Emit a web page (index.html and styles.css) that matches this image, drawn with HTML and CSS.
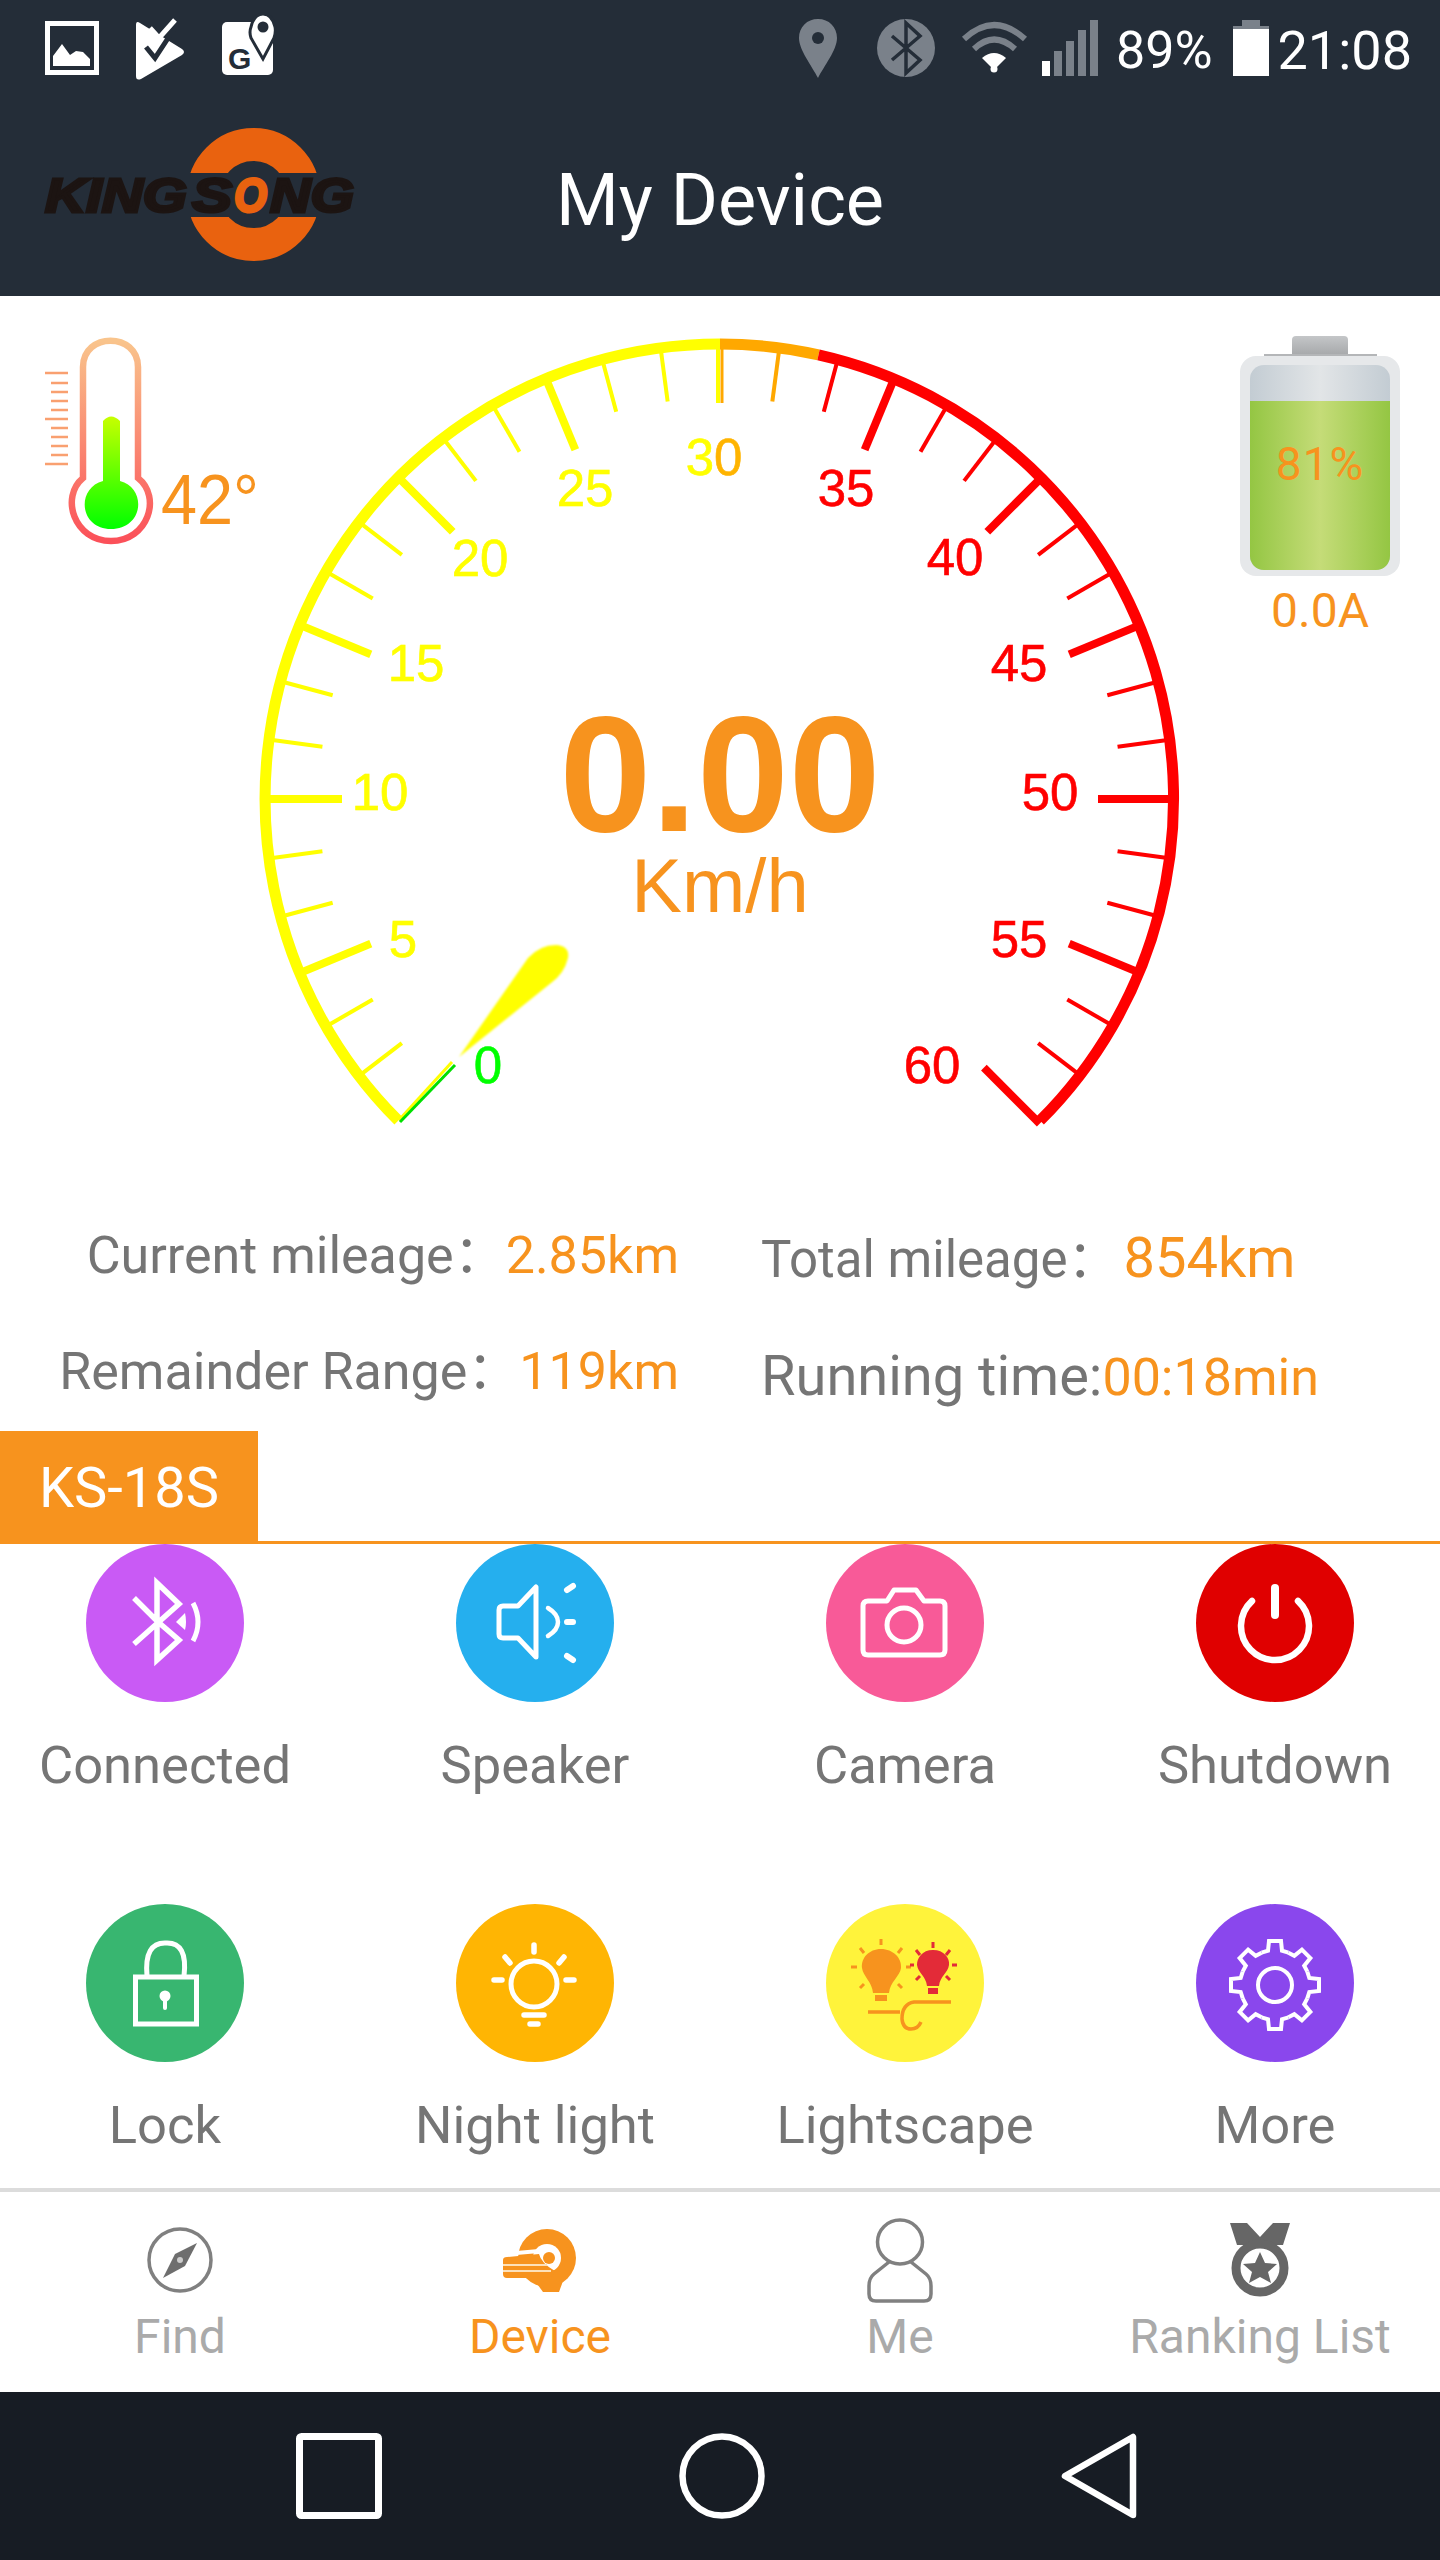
FILE: index.html
```html
<!DOCTYPE html>
<html lang="en">
<head>
    <meta charset="UTF-8">
    <title>My Device</title>
    <link rel="stylesheet" href="styles.css">
</head>
<body>
    <div class="app">
        <header class="top">
            <div class="status-bar">
                <div class="status-left">
                    <svg width="54" height="66" viewBox="0 0 54 66">
                        <rect x="2.5" y="9.5" width="49" height="49" fill="none" stroke="#fff" stroke-width="5"/>
                        <path d="M8 52V42L17 30L25 41L31 37L38 38L45 45V52Z" fill="#fff"/>
                    </svg>
                    <svg width="49" height="66" viewBox="0 0 49 66">
                        <path d="M0 11Q0 6 4 9L46 35Q50 38 46 41L5 65Q0 67 0 62Z" fill="#fff"/>
                        <path d="M10 33L19 44L42 9" fill="none" stroke="#242d38" stroke-width="5"/>
                        <path d="M14 14L23 24L39 6" fill="none" stroke="#fff" stroke-width="5"/>
                    </svg>
                    <svg width="53" height="66" viewBox="0 0 53 66">
                        <rect x="0" y="8" width="51" height="53" rx="5" fill="#fff"/>
                        <path d="M41 45L29 24Q27 18 29 13Q32 0 41 0Q50 0 53 13Q54 18 52 24Z" fill="#fff" stroke="#242d38" stroke-width="3"/>
                        <circle cx="41" cy="13" r="5.5" fill="#242d38"/>
                        <text class="map-g" x="6" y="55">G</text>
                    </svg>
                </div>
                <div class="status-right">
                    <svg class="s-pin" width="38" height="66" viewBox="0 0 38 66">
                        <path d="M19 5C8 5 0 13 0 24C0 36 13 52 19 64C25 52 38 36 38 24C38 13 30 5 19 5Z" fill="#7a818a"/>
                        <circle cx="19" cy="24" r="6" fill="#242d38"/>
                    </svg>
                    <svg class="s-bt" width="58" height="66" viewBox="0 0 58 66">
                        <ellipse cx="29" cy="34" rx="29" ry="29" fill="#7a818a"/>
                        <path d="M15 22L43 46L29 59V9L43 22L15 46" fill="none" stroke="#242d38" stroke-width="3.5"/>
                    </svg>
                    <svg class="s-wifi" width="67" height="66" viewBox="0 0 67 66">
                        <path d="M3 25Q33 -3 64 25" fill="none" stroke="#7a818a" stroke-width="6"/>
                        <path d="M13 35Q33 16 54 35" fill="none" stroke="#7a818a" stroke-width="6"/>
                        <path d="M21 44L33 56L45 44Q33 34 21 44Z" fill="#fff"/>
                        <circle cx="33" cy="55" r="3.5" fill="#fff"/>
                    </svg>
                    <svg class="s-bars" width="56" height="66" viewBox="0 0 56 66">
                        <rect x="0" y="47" width="8" height="15" fill="#fff"/>
                        <rect x="12" y="37" width="8" height="25" fill="#7a818a"/>
                        <rect x="24" y="27" width="8" height="35" fill="#7a818a"/>
                        <rect x="36" y="16" width="8" height="46" fill="#7a818a"/>
                        <rect x="48" y="6" width="8" height="56" fill="#7a818a"/>
                    </svg>
                    <span class="s-text s-percent">89%</span>
                    <svg class="s-battery" width="36" height="66" viewBox="0 0 36 66">
                        <path d="M9 6H27V12H36V15H0V12H9Z" fill="#7a818a"/>
                        <rect x="0" y="15" width="36" height="47" fill="#fff"/>
                    </svg>
                    <span class="s-text s-time">21:08</span>
                </div>
            </div>
            <div class="app-bar">
                <svg class="logo" width="310" height="134" viewBox="45 128 310 134">
                    <circle cx="253.5" cy="194.5" r="50" fill="none" stroke="#e9620f" stroke-width="33"/>
                    <rect x="45" y="173" width="310" height="44" fill="#242d38"/>
                    <text class="logo-text" x="45" y="212" textLength="142" lengthAdjust="spacingAndGlyphs">KING</text>
                    <text class="logo-text" x="192" y="212" textLength="40" lengthAdjust="spacingAndGlyphs">S</text>
                    <text class="logo-text logo-o" x="234" y="212" textLength="33" lengthAdjust="spacingAndGlyphs">O</text>
                    <text class="logo-text" x="270" y="212" textLength="84" lengthAdjust="spacingAndGlyphs">NG</text>
                </svg>
                <h1 class="title">My Device</h1>
            </div>
        </header>

        <section class="gauge-row">
            <svg class="thermo" width="215" height="220" viewBox="45 330 215 220">
                <defs>
                    <linearGradient id="tubeGrad" x1="0" y1="0" x2="0" y2="1">
                        <stop offset="0" stop-color="#f9c48c"/>
                        <stop offset="1" stop-color="#fb5059"/>
                    </linearGradient>
                    <linearGradient id="fillGrad" gradientUnits="userSpaceOnUse" x1="0" y1="416" x2="0" y2="529">
                        <stop offset="0" stop-color="#c8ff00"/>
                        <stop offset="1" stop-color="#00ff00"/>
                    </linearGradient>
                </defs>
                <path d="M83 478V367C83 332 138 332 138 367V478C162 497 148 541 111 541C74 541 60 497 83 478Z" fill="none" stroke="url(#tubeGrad)" stroke-width="6.5"/>
                <path d="M103 481V421Q111 412 120 421V481C147 488 144 529 111 529C79 529 76 488 103 481Z" fill="url(#fillGrad)"/>
                <g class="thermo-ticks">
                    <path d="M45 373H68M51 383H68M51 392H68M51 401H68M51 410H68M45 419H68M51 428H68M51 437H68M51 446H68M51 455H68M45 464H68"/>
                </g>
                <text class="temp" x="161" y="524" textLength="98" lengthAdjust="spacingAndGlyphs">42°</text>
            </svg>

            <svg class="gauge" width="930" height="850" viewBox="255 296 930 850">
                <defs>
                    <line id="major" x1="720" y1="342" x2="720" y2="421" stroke-width="8"/>
                    <line id="minor" x1="720" y1="342" x2="720" y2="398" stroke-width="4"/>
                </defs>
                <!-- outer ring -->
                <path class="ring-y" d="M398.3 1120.7A455 455 0 0 1 720 344"/>
                <path class="ring-o" d="M720 344A455 455 0 0 1 818.5 354.8"/>
                <path class="ring-r" d="M818.5 354.8A455 455 0 0 1 1040 1120.7"/>

                <g class="tick-y">
                    <use href="#minor" transform="rotate(-127.5 720 799)"/>
                    <use href="#minor" transform="rotate(-120 720 799)"/>
                    <use href="#major" transform="rotate(-112.5 720 799)"/>
                    <use href="#minor" transform="rotate(-105 720 799)"/>
                    <use href="#minor" transform="rotate(-97.5 720 799)"/>
                    <use href="#major" transform="rotate(-90 720 799)"/>
                    <use href="#minor" transform="rotate(-82.5 720 799)"/>
                    <use href="#minor" transform="rotate(-75 720 799)"/>
                    <use href="#major" transform="rotate(-67.5 720 799)"/>
                    <use href="#minor" transform="rotate(-60 720 799)"/>
                    <use href="#minor" transform="rotate(-52.5 720 799)"/>
                    <use href="#major" transform="rotate(-45 720 799)"/>
                    <use href="#minor" transform="rotate(-37.5 720 799)"/>
                    <use href="#minor" transform="rotate(-30 720 799)"/>
                    <use href="#major" transform="rotate(-22.5 720 799)"/>
                    <use href="#minor" transform="rotate(-15 720 799)"/>
                    <use href="#minor" transform="rotate(-7.5 720 799)"/>
                    <line x1="718" y1="342" x2="718" y2="403" stroke-width="4"/>
                </g>
                <g class="tick-o">
                    <line x1="722" y1="342" x2="722" y2="403" stroke-width="3"/>
                    <use href="#minor" transform="rotate(7.5 720 799)"/>
                </g>
                <g class="tick-r">
                    <use href="#minor" transform="rotate(15 720 799)"/>
                    <use href="#major" transform="rotate(22.5 720 799)"/>
                    <use href="#minor" transform="rotate(30 720 799)"/>
                    <use href="#minor" transform="rotate(37.5 720 799)"/>
                    <use href="#major" transform="rotate(45 720 799)"/>
                    <use href="#minor" transform="rotate(52.5 720 799)"/>
                    <use href="#minor" transform="rotate(60 720 799)"/>
                    <use href="#major" transform="rotate(67.5 720 799)"/>
                    <use href="#minor" transform="rotate(75 720 799)"/>
                    <use href="#minor" transform="rotate(82.5 720 799)"/>
                    <use href="#major" transform="rotate(90 720 799)"/>
                    <use href="#minor" transform="rotate(97.5 720 799)"/>
                    <use href="#minor" transform="rotate(105 720 799)"/>
                    <use href="#major" transform="rotate(112.5 720 799)"/>
                    <use href="#minor" transform="rotate(120 720 799)"/>
                    <use href="#minor" transform="rotate(127.5 720 799)"/>
                    <use href="#major" transform="rotate(135 718 799)"/>
                </g>
                <!-- zero tick is half yellow, half green -->
                <line class="zero-y" x1="399" y1="1120" x2="452" y2="1062"/>
                <line class="zero-g" x1="400" y1="1122" x2="455" y2="1065"/>
                <path class="needle" d="M459 1057L528 958Q540 945 556 945Q570 946 568 958Q564 974 551 983Z"/>

                <g class="scale scale-y">
                    <text x="403" y="957">5</text>
                    <text x="380" y="810">10</text>
                    <text x="416" y="681">15</text>
                    <text x="480" y="576">20</text>
                    <text x="585" y="506">25</text>
                </g>
                <g class="scale scale-y">
                    <text x="714" y="475">3<tspan class="scale-o">0</tspan></text>
                </g>
                <g class="scale scale-g">
                    <text x="488" y="1083">0</text>
                </g>
                <g class="scale scale-r">
                    <text x="846" y="506">35</text>
                    <text x="955" y="575">40</text>
                    <text x="1019" y="681">45</text>
                    <text x="1050" y="810">50</text>
                    <text x="1019" y="957">55</text>
                    <text x="932" y="1083">60</text>
                </g>
                <text class="speed" x="720" y="831">0.00</text>
                <text class="unit" x="720" y="912">Km/h</text>
            </svg>

            <div class="battery-box">
                <div class="bat-cap"></div>
                <div class="bat-shoulder"></div>
                <div class="bat-body">
                    <div class="bat-inner">
                        <div class="bat-level"><span>81%</span></div>
                    </div>
                </div>
                <div class="bat-current">0.0A</div>
            </div>
        </section>

        <section class="stats">
            <div class="stats-col stats-left">
                <p>Current mileage：<span class="val">2.85km</span></p>
                <p>Remainder Range：<span class="val">119km</span></p>
            </div>
            <div class="stats-col stats-right">
                <p class="total">Total mileage：<span class="val">854km</span></p>
                <p class="running">Running time:<span class="val">00:18min</span></p>
            </div>
        </section>

        <div class="model-bar"><div class="model-tag">KS-18S</div></div>

        <section class="functions">
            <div class="fn">
                <svg class="fn-icon" width="158" height="158" viewBox="0 0 158 158">
                    <circle cx="79" cy="79" r="79" fill="#c95af5"/>
                    <path d="M48 54L71 77L93 96L71 116V39L93 60L48 100" fill="none" stroke="#fff" stroke-width="5.5"/>
                    <path d="M90 78L99 69Q101 78 99 86Z" fill="#fff"/>
                    <path d="M107 59Q117 78 107 97" fill="none" stroke="#fff" stroke-width="5"/>
                </svg>
                <span>Connected</span>
            </div>
            <div class="fn">
                <svg class="fn-icon" width="158" height="158" viewBox="0 0 158 158">
                    <circle cx="79" cy="79" r="79" fill="#25afee"/>
                    <path d="M47 62H62L80 43V113L62 94H47Q43 94 43 90V66Q43 62 47 62Z" fill="none" stroke="#fff" stroke-width="5" stroke-linejoin="round"/>
                    <path d="M92 64Q102 70 102 78Q102 86 92 92" fill="none" stroke="#fff" stroke-width="4.5" stroke-linecap="round"/>
                    <path d="M111 46L117 42M111 78H117M111 112L117 116" fill="none" stroke="#fff" stroke-width="6" stroke-linecap="round"/>
                </svg>
                <span>Speaker</span>
            </div>
            <div class="fn">
                <svg class="fn-icon" width="158" height="158" viewBox="0 0 158 158">
                    <circle cx="79" cy="79" r="79" fill="#f85a98"/>
                    <path d="M42 57H61L68 46H90L98 57H114Q119 57 119 62V106Q119 111 114 111H42Q37 111 37 106V62Q37 57 42 57Z" fill="none" stroke="#fff" stroke-width="5" stroke-linejoin="round"/>
                    <circle cx="78" cy="81" r="17" fill="none" stroke="#fff" stroke-width="5"/>
                </svg>
                <span>Camera</span>
            </div>
            <div class="fn">
                <svg class="fn-icon" width="158" height="158" viewBox="0 0 158 158">
                    <circle cx="79" cy="79" r="79" fill="#e00000"/>
                    <path d="M79 44V71" fill="none" stroke="#fff" stroke-width="8" stroke-linecap="round"/>
                    <path d="M56 57A34 34 0 1 0 102 57" fill="none" stroke="#fff" stroke-width="6.5" stroke-linecap="round"/>
                </svg>
                <span>Shutdown</span>
            </div>
            <div class="fn">
                <svg class="fn-icon" width="158" height="158" viewBox="0 0 158 158">
                    <circle cx="79" cy="79" r="79" fill="#38b670"/>
                    <rect x="49.5" y="73" width="61" height="47" fill="none" stroke="#fff" stroke-width="5"/>
                    <path d="M61 72Q58 38 80 39Q102 38 98 72" fill="none" stroke="#fff" stroke-width="5"/>
                    <circle cx="79" cy="92" r="5.5" fill="#fff"/>
                    <path d="M79 92V104" fill="none" stroke="#fff" stroke-width="4" stroke-linecap="round"/>
                </svg>
                <span>Lock</span>
            </div>
            <div class="fn">
                <svg class="fn-icon" width="158" height="158" viewBox="0 0 158 158">
                    <circle cx="79" cy="79" r="79" fill="#ffb503"/>
                    <ellipse cx="78" cy="80" rx="23" ry="23" fill="none" stroke="#fff" stroke-width="5"/>
                    <path d="M68 111H88M74 120H82M78 41V48M49 53L54 59M108 53L103 59M38 76H46M110 76H118" fill="none" stroke="#fff" stroke-width="5.5" stroke-linecap="round"/>
                </svg>
                <span>Night light</span>
            </div>
            <div class="fn">
                <svg class="fn-icon" width="158" height="158" viewBox="0 0 158 158">
                    <circle cx="79" cy="79" r="79" fill="#fff33b"/>
                    <path d="M55 45C43 45 35 54 36 64C37 72 46 78 47 89H63C64 78 74 72 75 64C76 54 67 45 55 45Z" fill="#f7931e"/>
                    <rect x="49" y="91" width="12" height="6" fill="#f7931e"/>
                    <path d="M55 35V41M34 44L38 49M76 44L72 49M25 63H31M80 63H85M34 84L38 80M76 84L72 80" fill="none" stroke="#f7931e" stroke-width="3"/>
                    <path d="M107 46C96 46 91 54 91 61C92 69 100 72 101 82H113C114 72 122 69 123 61C124 54 118 46 107 46Z" fill="#e32b38"/>
                    <rect x="102" y="84" width="10" height="6" fill="#e32b38"/>
                    <path d="M107 38V44M90 46L94 51M124 46L120 51M84 61H88M126 61H131M90 76L94 72M124 76L120 72" fill="none" stroke="#e32b38" stroke-width="3"/>
                    <path d="M42 108H74M125 98H88Q76 100 76 115Q77 125 85 125Q92 125 95 118" fill="none" stroke="#f7931e" stroke-width="3.5"/>
                </svg>
                <span>Lightscape</span>
            </div>
            <div class="fn">
                <svg class="fn-icon" width="158" height="158" viewBox="0 0 158 158">
                    <defs>
                        <path id="gearPart" d="M-13.4 -32.3L-7 -34.3L-6 -44H6L7 -34.3L13.4 -32.3"/>
                    </defs>
                    <circle cx="79" cy="79" r="79" fill="#8a47ed"/>
                    <g class="gear" transform="translate(79 81)">
                        <use href="#gearPart"/>
                        <use href="#gearPart" transform="rotate(45)"/>
                        <use href="#gearPart" transform="rotate(90)"/>
                        <use href="#gearPart" transform="rotate(135)"/>
                        <use href="#gearPart" transform="rotate(180)"/>
                        <use href="#gearPart" transform="rotate(225)"/>
                        <use href="#gearPart" transform="rotate(270)"/>
                        <use href="#gearPart" transform="rotate(315)"/>
                        <circle r="17"/>
                    </g>
                </svg>
                <span>More</span>
            </div>
        </section>

        <nav class="tabs">
            <div class="tab">
                <div class="tab-icon">
                    <svg width="68" height="68" viewBox="0 0 68 68">
                        <circle cx="34" cy="34" r="31" fill="none" stroke="#808080" stroke-width="3.5"/>
                        <path d="M51 17L39 40L17 52L29 28Z" fill="#6e6e6e"/>
                        <circle cx="34" cy="34" r="3" fill="#ccc"/>
                    </svg>
                </div>
                <span>Find</span>
            </div>
            <div class="tab tab-active">
                <div class="tab-icon">
                    <svg width="74" height="66" viewBox="0 0 74 66">
                        <circle cx="44" cy="31" r="29" fill="#f7931e"/>
                        <path d="M32 54H60L56 65H40Z" fill="#f7931e"/>
                        <circle cx="44" cy="31" r="14" fill="#fff"/>
                        <circle cx="46" cy="31" r="6" fill="#f7931e"/>
                        <path d="M2 27L36 24" fill="none" stroke="#fff" stroke-width="4"/>
                        <path d="M0 33Q0 30 4 30L36 27Q38 36 52 44Q50 50 42 51H4Q0 51 0 47Z" fill="#f7931e"/>
                        <path d="M0 38H44M0 44H48" fill="none" stroke="#fde0b8" stroke-width="2"/>
                    </svg>
                </div>
                <span>Device</span>
            </div>
            <div class="tab">
                <div class="tab-icon">
                    <svg width="66" height="85" viewBox="0 0 66 85">
                        <path d="M22 44L7 56Q2 60 2 68V76Q2 83 9 83H57Q64 83 64 76V68Q64 60 59 56L44 44" fill="none" stroke="#808080" stroke-width="3.5"/>
                        <ellipse cx="33" cy="24" rx="22.5" ry="22" fill="#fff" stroke="#808080" stroke-width="3.5"/>
                    </svg>
                </div>
                <span>Me</span>
            </div>
            <div class="tab">
                <div class="tab-icon">
                    <svg width="60" height="74" viewBox="0 0 60 74">
                        <path d="M0 0H17L30 14L43 0H60L53 22H42L30 17L18 22H7Z" fill="#666"/>
                        <circle cx="30" cy="45" r="24" fill="none" stroke="#666" stroke-width="9"/>
                        <path d="M30 29L35 40L47 41L38 49L41 60L30 54L19 60L22 49L13 41L25 40Z" fill="#666"/>
                    </svg>
                </div>
                <span>Ranking List</span>
            </div>
        </nav>

        <footer class="nav-bar">
            <svg width="86" height="86" viewBox="0 0 86 86">
                <rect x="3.5" y="3.5" width="79" height="79" rx="2" fill="none" stroke="#fff" stroke-width="7"/>
            </svg>
            <svg width="86" height="86" viewBox="0 0 86 86">
                <circle cx="43" cy="43" r="39.5" fill="none" stroke="#fff" stroke-width="6.5"/>
            </svg>
            <svg width="76" height="86" viewBox="0 0 76 86">
                <path d="M72 4V82L4 43Z" fill="none" stroke="#fff" stroke-width="6.5" stroke-linejoin="round"/>
            </svg>
        </footer>
    </div>
</body>
</html>
```

FILE: styles.css
```css
body {
    margin: 0;
    background-color: #fff;
    font-family: Roboto, "Noto Sans CJK SC", sans-serif;
}
p, h1 {
    margin: 0;
}
svg {
    display: block;
    overflow: visible;
}
.app {
    width: 1440px;
    height: 2560px;
    overflow: hidden;
}

/* top */
.top {
    height: 296px;
    background-color: #242d38;
}
.status-bar {
    display: flex;
    justify-content: space-between;
    height: 80px;
    padding: 14px 28px 0 45px;
    box-sizing: border-box;
}
.status-left {
    display: flex;
    gap: 37px;
}
.status-right {
    display: flex;
}
.s-pin { margin-right: 40px; }
.s-bt { margin-right: 26px; }
.s-wifi { margin-right: 14px; }
.s-bars { margin-right: 18px; }
.s-battery { margin: 0 9px 0 20px; }
.s-text {
    color: #fff;
    font-size: 52px;
    line-height: 66px;
    padding-top: 4px;
}
.s-time {
    font-size: 54px;
}
.map-g {
    font-family: "Liberation Sans", sans-serif;
    font-weight: bold;
    font-size: 30px;
    fill: #242d38;
}
.app-bar {
    display: grid;
    grid-template-columns: 1fr auto 1fr;
    align-items: center;
    height: 216px;
    padding-left: 45px;
}
.logo {
    margin-top: 13px;
}
.logo-text {
    font-family: "Liberation Sans", sans-serif;
    font-weight: bold;
    font-style: italic;
    font-size: 49px;
    fill: #1c1412;
    stroke: #1c1412;
    stroke-width: 3;
}
.logo-o {
    fill: #e9620f;
    stroke: #e9620f;
}
.title {
    margin: 25px 0 0 -45px;
    color: #fff;
    font-size: 72px;
    font-weight: 400;
    line-height: 84px;
}

/* gauge */
.gauge-row {
    display: flex;
    height: 850px;
    padding-left: 45px;
}
.thermo {
    flex: none;
    margin-top: 34px;
}
.thermo-ticks path {
    fill: none;
    stroke: #f9a070;
    stroke-width: 2.5;
}
.temp {
    font-family: "Liberation Sans", sans-serif;
    font-size: 71px;
    fill: #f7931e;
}
.gauge {
    flex: none;
    margin-left: -5px;
}
.ring-y, .ring-o, .ring-r {
    fill: none;
    stroke-width: 11;
}
.ring-y { stroke: #ffff00; }
.ring-o { stroke: #ffa800; }
.ring-r { stroke: #ff0000; }
.tick-y { stroke: #ffff00; }
.tick-o { stroke: #ffa800; }
.tick-r { stroke: #ff0000; }
.zero-y {
    stroke: #ffff00;
    stroke-width: 3;
}
.zero-g {
    stroke: #00e000;
    stroke-width: 3;
}
.needle {
    fill: #ffff00;
    filter: blur(1px);
}
.scale text {
    font-family: "Liberation Sans", sans-serif;
    font-size: 51px;
    text-anchor: middle;
    stroke-width: 0.6;
}
.scale-y { fill: #ffff00; stroke: #ffff00; }
.scale-r { fill: #ff0000; stroke: #ff0000; }
.scale-g { fill: #00ff00; stroke: #00ff00; }
.scale-o { fill: #ffb400; stroke: #ffb400; }
.speed {
    font-family: "Liberation Sans", sans-serif;
    font-size: 165px;
    font-weight: bold;
    text-anchor: middle;
    fill: #f7931e;
}
.unit {
    font-family: "Liberation Sans", sans-serif;
    font-size: 76px;
    text-anchor: middle;
    fill: #f7931e;
}

/* battery */
.battery-box {
    flex: none;
    display: flex;
    flex-direction: column;
    align-items: center;
    width: 160px;
    margin: 40px 0 0 55px;
}
.bat-cap {
    width: 56px;
    height: 18px;
    border-radius: 4px 4px 0 0;
    background: linear-gradient(to bottom, #c4c6c8, #a8aaac);
}
.bat-shoulder {
    width: 113px;
    height: 2px;
    background-color: #b4b6b8;
}
.bat-body {
    width: 160px;
    height: 220px;
    padding: 9px 10px 6px;
    box-sizing: border-box;
    border-radius: 16px;
    background-color: #e6e8ea;
}
.bat-inner {
    display: flex;
    flex-direction: column;
    justify-content: flex-end;
    height: 100%;
    overflow: hidden;
    border-radius: 14px;
    background: linear-gradient(to right, #c3ccd3, #e2e5e7 50%, #c3ccd3);
}
.bat-level {
    height: 169px;
    text-align: center;
    color: #f7931e;
    font-size: 46px;
    letter-spacing: 1px;
    line-height: 54px;
    padding-top: 36px;
    box-sizing: border-box;
    background: linear-gradient(to right, #94c643, #c5dc78 50%, #94c643);
}
.bat-current {
    margin-top: 7px;
    color: #f7931e;
    font-size: 48px;
    line-height: 56px;
}

/* stats */
.stats {
    display: flex;
    height: 285px;
    color: #757575;
    font-size: 52px;
    line-height: 116px;
}
.stats-col p {
    white-space: nowrap;
}
.stats-left {
    width: 679px;
    margin-top: 52px;
    text-align: right;
}
.stats-right {
    margin: 54px 0 0 82px;
}
.total {
    font-size: 51px;
}
.total .val {
    margin-left: 5px;
    font-size: 56px;
}
.running {
    font-size: 56px;
}
.running .val {
    font-size: 52px;
}
.val {
    color: #f7931e;
}

.model-bar {
    display: flex;
    height: 113px;
    box-sizing: border-box;
    border-bottom: 3px solid #f7931e;
}
.model-tag {
    width: 258px;
    height: 113px;
    box-sizing: border-box;
    padding-top: 25px;
    background-color: #f7931e;
    color: #fff;
    font-size: 56px;
    line-height: 64px;
    text-align: center;
}

/* function buttons */
.functions {
    display: grid;
    grid-template-columns: repeat(4, 330px);
    grid-auto-rows: 360px;
    column-gap: 40px;
    height: 644px;
    border-bottom: 4px solid #dcdcdc;
}
.fn {
    display: flex;
    flex-direction: column;
    align-items: center;
    color: #757575;
    font-size: 52.5px;
    line-height: 60px;
}
.fn span {
    margin-top: 33px;
}
.gear {
    fill: none;
    stroke: #fff;
    stroke-width: 4;
}

/* bottom tabs */
.tabs {
    display: flex;
    height: 200px;
    box-sizing: border-box;
    padding-top: 23px;
}
.tab {
    flex: 1;
    display: flex;
    flex-direction: column;
    align-items: center;
    color: #aaa;
    font-size: 48px;
    line-height: 56px;
}
.tab-active {
    color: #f7931e;
}
.tab-icon {
    display: flex;
    align-items: center;
    justify-content: center;
    height: 90px;
    margin-bottom: 4px;
}
.nav-bar {
    display: flex;
    justify-content: space-between;
    height: 168px;
    padding: 41px 303px 0 296px;
    box-sizing: border-box;
    background-color: #171c24;
}
```
